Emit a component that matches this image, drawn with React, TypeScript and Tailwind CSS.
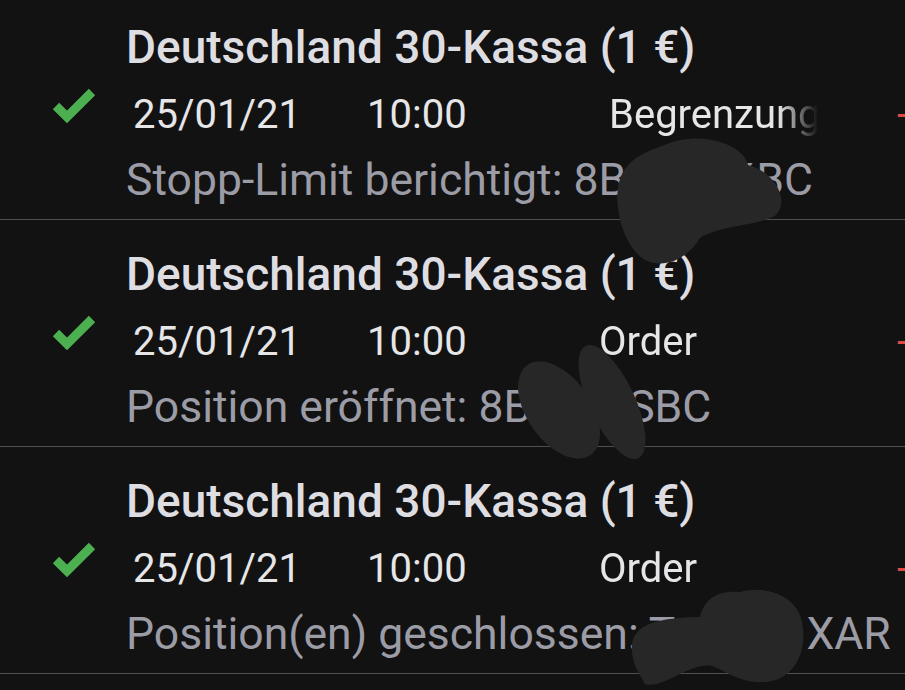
import React from "react";

type Row = {
  type: string;
  typeOffset: string;
  pre: string;
  hidden: string;
  gap: string;
  post: string;
};

const rows: Row[] = [
  { type: "Begrenzung", typeOffset: "pl-[10px]", pre: "Stopp-Limit berichtigt: 8B", hidden: "XXXX", gap: "w-[130px] pl-[16px]", post: "BC" },
  { type: "Order", typeOffset: "pl-0", pre: "Position eröffnet: 8B", hidden: "XX", gap: "w-[97px] pl-[22px]", post: "SBC" },
  { type: "Order", typeOffset: "pl-0", pre: "Position(en) geschlossen: T", hidden: "XXX", gap: "w-[131px] pl-[36px]", post: "XAR" },
];

function Check() {
  return (
    <svg width="48" height="40" viewBox="0 0 48 40" className="block ml-[50px] mt-[12px]">
      <path
        d="M6 20 L17 31 L42 6"
        fill="none"
        stroke="#4caf50"
        strokeWidth="9"
        strokeLinecap="butt"
        strokeLinejoin="miter"
      />
    </svg>
  );
}

export default function App() {
  return (
    <div
      className="relative w-[905px] h-[690px] overflow-hidden bg-[#121212] [font-variant-ligatures:none]"
      style={{ fontFamily: "Roboto, 'Noto Sans', sans-serif" }}
    >
      <div className="-mt-[7px]">
        {rows.map((r, i) => (
          <div key={i} className="h-[227px] border-b border-[#4f4f4f] pt-[27px] grid grid-cols-[126px_1fr] content-start">
            <div />
            <div className="h-[54px] leading-[54px] text-[46px] font-medium text-[#dedee2] whitespace-nowrap">
              Deutschland 30-Kassa (1 €)
            </div>
            <div>
              <Check />
            </div>
            <div className="h-[82px] leading-[82px] text-[40px] text-[#e6e6e8] flex whitespace-nowrap">
              <span className="w-[241px] pl-[7px]">25/01/21</span>
              <span className="w-[232px]">10:00</span>
              <span
                className={`w-[219px] overflow-hidden ${r.typeOffset} [mask-image:linear-gradient(to_right,black_82%,transparent)]`}
              >
                {r.type}
              </span>
              <span className="pl-[79px] text-[#e04848]">-</span>
            </div>
            <div />
            <div className="h-[48px] leading-[48px] text-[44.5px] text-[#9c9ca7] whitespace-nowrap flex">
              <span>{r.pre}</span>
              <span className={`${r.gap} overflow-hidden`}>{r.hidden}</span>
              <span>{r.post}</span>
            </div>
          </div>
        ))}
      </div>
      <svg className="absolute inset-0 pointer-events-none" width="905" height="690" viewBox="0 0 905 690">
        <g fill="#272727">
          <path d="M662 146 C700 128 745 145 748 165 C775 172 790 200 776 215 C760 226 720 225 700 238 C690 255 670 268 650 262 C628 255 614 215 618 188 C622 162 640 154 662 146 Z" />
          <ellipse cx="559" cy="410" rx="32" ry="55" transform="rotate(-35 559 410)" />
          <ellipse cx="612" cy="402" rx="23" ry="62" transform="rotate(-25 612 402)" />
          <path d="M636 668 C620 626 650 618 700 617 C704 600 716 590 740 592 C765 585 797 595 802 622 C808 650 795 680 765 682 C742 684 728 672 712 666 C690 662 662 690 645 684 Z" />
        </g>
      </svg>
    </div>
  );
}
